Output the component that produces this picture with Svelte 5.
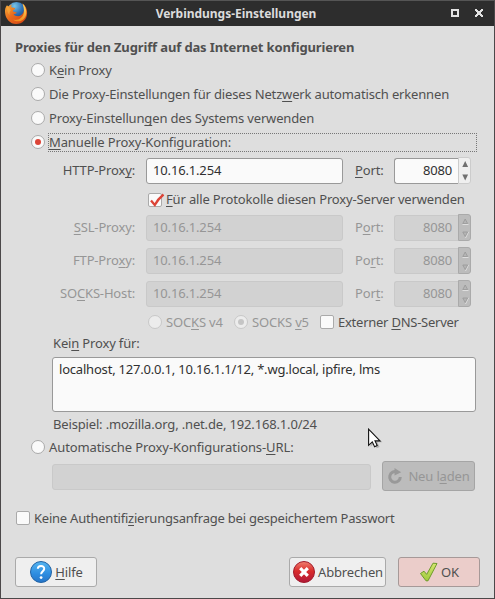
<script>
  const proxies = [
    { label: 'HTTP-Prox_y:', port: '_Port:', on: true, h: 34 },
    { label: '_SSL-Proxy:', port: 'P_ort:', h: 34 },
    { label: 'FTP-Pro_xy:', port: 'Po_rt:', h: 32 },
    { label: 'SO_CKS-Host:', port: 'Por_t:', h: 34 }
  ];
  const modes = [
    'K_ein Proxy',
    'Die Proxy-Einstellungen für dieses Netz_werk automatisch erkennen',
    'Proxy-Einstellun_gen des Systems verwenden'
  ];
</script>

{#snippet mn(t)}{@const i = t.indexOf('_')}{#if i < 0}{t}{:else}{t.slice(0, i)}<u>{t[i + 1]}</u>{t.slice(i + 2)}{/if}{/snippet}

{#snippet proxyRow(p)}
  <div class="row proxy" class:off={!p.on} style="height: {p.h}px">
    <span class="lab">{@render mn(p.label)}</span>
    <div class="field host">10.16.1.254</div>
    <span class="plab">{@render mn(p.port)}</span>
    <div class="spin">
      <div class="num">8080</div>
      <svg class="arrows" width="11" height="25" viewBox="0 0 11 25">
        {#if p.on}
          <path d="M6.200 3l2.900 6H3.300zM6.200 22.500l2.900-6H3.300z" fill="#707070" />
        {:else}
          <path d="M3.500 9.500h6M6.500 23l3-6" stroke="#dedede" fill="none" />
          <path d="M6.200 4l2.400 4.500H3.800zM6.200 21.500l2.400-4.500H3.800z" fill="#b5b5b5" stroke="#989898" stroke-width=".8" />
        {/if}
      </svg>
    </div>
  </div>
{/snippet}

<div class="window">
  <header>
    <svg class="fox" width="24" height="24" viewBox="0 0 24 24">
      <defs>
        <radialGradient id="globe" cx=".4" cy=".2" r=".8"><stop offset="0" stop-color="#77c5e8" /><stop offset=".5" stop-color="#2f71b5" /><stop offset="1" stop-color="#17356c" /></radialGradient>
        <linearGradient id="fur" x1="0" y1="0" x2="1" y2="1"><stop offset="0" stop-color="#f6b13b" /><stop offset=".45" stop-color="#ea6a1c" /><stop offset="1" stop-color="#cf3f12" /></linearGradient>
        <linearGradient id="tail" x1="0" y1="0" x2="0" y2="1"><stop offset="0" stop-color="#ffe46b" /><stop offset="1" stop-color="#f28b1c" /></linearGradient>
      </defs>
      <circle cx="12.500" cy="11" r="10" fill="url(#globe)" />
      <path d="M3 4.300C1.500 6 .6 8.900 1.100 12c.5 6 5 11 11 11 6.400 0 11-4.700 11-11 0-4-1.500-7.500-4.500-9.500 1.800 3 2.200 6 .8 9-1.200 2.700-4 4-6.600 3.600-2-.3-3-1.300-3.300-2.300 1.300.5 3-.2 3.500-1.200-1.500-.2-2.500-1.400-4-1.200-.2-1 .8-1.700 2-2.300.2-.8 0-1.100-.6-1.100-1.400 0-2.600-.4-3.300-1.400.2-.9.700-1.600 1.200-2-1.600.1-2.700.8-3.300 1.700C4.200 5.400 3.400 5 3 4.300z" fill="url(#fur)" />
      <path d="M18.500 2.500c4.500 4.500 5.500 12 .8 16-3 2.500-7.500 2.300-10 .3 5.800.8 10-2.400 10.600-7.300.3-3-.3-6-1.400-9z" fill="url(#tail)" />
      <path d="M3.200 5.500C2.500 9 3.600 12 5.500 14c-.2-2 .2-3.600 1.300-4.700L5 6.300z" fill="#f9a93a" opacity=".7" />
    </svg>
    <span class="title">Verbindungs-Einstellungen</span>
    <svg class="ctl" width="34" height="10" viewBox="0 0 34 10" shape-rendering="crispEdges">
      <path d="M1 1h8v8H1zM3 3v4h4V3z" fill="#e2e2e2" fill-rule="evenodd" />
      <path d="M25 1h2v1h1v1h2V2h1V1h2v2h-1v1h-1v2h1v1h1v2h-2V8h-1V7h-2v1h-1v1h-2V7h1V6h1V4h-1V3h-1z" fill="#e2e2e2" />
    </svg>
  </header>

  <main>
    <h1>Proxies für den Zugriff auf das Internet konfigurieren</h1>
    {#each modes as m}
      <div class="row mode"><i class="radio"></i><span>{@render mn(m)}</span></div>
    {/each}
    <div class="row mode manual"><i class="radio sel"></i><span class="focus">{@render mn('_Manuelle Proxy-Konfiguration:')}</span></div>

    {@render proxyRow(proxies[0])}
    <div class="row all">
      <i class="check"><svg width="18" height="16" viewBox="0 0 18 16"><path d="M3 7.500L6.800 12Q10 6 15.500 1.500" fill="none" stroke="#dc4437" stroke-width="2.300" /></svg></i>
      <span>{@render mn('_Für alle Protokolle diesen Proxy-Server verwenden')}</span>
    </div>
    {#each proxies.slice(1) as p}
      {@render proxyRow(p)}
    {/each}

    <div class="row socks">
      <i class="radio dis"></i><span class="dim ver">{@render mn('SOC_KS v4')}</span>
      <i class="radio dis sel"></i><span class="dim ver">{@render mn('SOCKS _v5')}</span>
      <i class="check"></i><span class="dns">{@render mn('Externer _DNS-Server')}</span>
    </div>

    <div class="row except"><span>{@render mn('Kei_n Proxy für:')}</span></div>
    <div class="area">localhost, 127.0.0.1, 10.16.1.1/12, *.wg.local, ipfire, lms</div>
    <div class="row example">Beispiel: .mozilla.org, .net.de, 192.168.1.0/24</div>
    <div class="row mode auto"><i class="radio"></i><span>{@render mn('Automatische Proxy-Konfigurations-_URL:')}</span></div>
    <div class="row url">
      <div class="field off-field"></div>
      <div class="btn reload">
        <svg width="16" height="18" viewBox="0 0 16 18"><path d="M10 5A5.300 5.300 0 1 0 13.300 10" fill="none" stroke="#999" stroke-width="3" /><path d="M7.500 1l6.700 4.200-6.700 3.300z" fill="#999" /></svg>
        <span>{@render mn('Neu l_aden')}</span>
      </div>
    </div>
    <div class="row auth"><i class="check"></i><span>{@render mn('Keine Authentifi_zierungsanfrage bei gespeichertem Passwort')}</span></div>

    <footer>
      <div class="btn help">
        <svg width="24" height="24" viewBox="0 0 24 24">
          <defs><linearGradient id="hb" x1="0" y1="0" x2="0" y2="1"><stop offset="0" stop-color="#55b5f0" /><stop offset=".6" stop-color="#2d8ce0" /><stop offset="1" stop-color="#2675c8" /></linearGradient></defs>
          <circle cx="12" cy="12" r="10.500" fill="url(#hb)" stroke="#2263a5" />
          <path d="M8.800 8.800C8.900 4.800 15.500 5 15.200 8.900c-.2 2.200-3 2.500-3.100 5.300" fill="none" stroke="#fff" stroke-width="2" />
          <circle cx="12.100" cy="17.600" r="1.400" fill="#fff" />
        </svg>
        <span>{@render mn('_Hilfe')}</span>
      </div>
      <div class="btn cancel">
        <svg width="24" height="24" viewBox="0 0 24 24">
          <defs><linearGradient id="rb" x1="0" y1="0" x2="0" y2="1"><stop offset="0" stop-color="#f08070" /><stop offset=".45" stop-color="#d92c2c" /><stop offset="1" stop-color="#b01838" /></linearGradient></defs>
          <circle cx="12" cy="12" r="10.500" fill="url(#rb)" stroke="#a11b2c" />
          <path d="M8.200 8.200l7.600 7.600M15.800 8.200l-7.600 7.600" stroke="#fff" stroke-width="3.200" />
        </svg>
        <span>Abbrechen</span>
      </div>
      <div class="btn ok">
        <svg width="20" height="22" viewBox="0 0 20 22">
          <defs><linearGradient id="gb" x1="0" y1="0" x2="0" y2="1"><stop offset="0" stop-color="#d5e66f" /><stop offset="1" stop-color="#9fcb3c" /></linearGradient></defs>
          <path d="M1.500 12.500L5 10.200l2.700 3.200L14 2.200l4 .3L9 19.800H7z" fill="url(#gb)" stroke="#6d9b2a" stroke-linejoin="round" />
        </svg>
        <span>OK</span>
      </div>
    </footer>
  </main>

  <svg class="pointer" width="16" height="22" viewBox="0 0 16 22">
    <path d="M1.500 1.500v16.300l3.900-3.600 2.300 5 2.900-1.200-2.200-4.800h4.900z" fill="#0003" transform="translate(1 1)" />
    <path d="M.6 1.200v16.100l3.700-3.500 2.300 4.900 2.600-1.200-2.200-4.600H12z" fill="#fff" stroke="#111" stroke-width="1.100" />
  </svg>
</div>

<style>
  :global(body) { margin: 0; background: #4b4849; }
  .window {
    box-sizing: border-box; width: 495px; height: 599px; position: relative;
    border: 1px solid #4b4849; border-top-color: #555; background: #dedede;
    font: 13px/18px 'Noto Sans', sans-serif; letter-spacing: -.16px; color: #505050; white-space: nowrap; overflow: hidden;
  }
  header { box-sizing: border-box; height: 25px; padding-right: 23px; background: #2d2d2d; display: flex; align-items: center; position: relative; justify-content: center; }
  .title { color: #dcdcdc; font-weight: 700; font-size: 12px; letter-spacing: -.03px; }
  .fox { position: absolute; left: 3px; top: 0; }
  .ctl { position: absolute; right: 10px; top: 7px; }
  main { display: flex; flex-direction: column; padding-top: 10px; }
  h1 { margin: 0 0 0 14px; font-size: 13px; line-height: 22px; height: 22px; font-weight: 700; letter-spacing: -.13px; }
  u { text-decoration: underline; text-decoration-thickness: 1px; text-underline-offset: 2px; text-decoration-skip-ink: none; }
  .row { display: flex; align-items: center; flex: none; }
  .mode { height: 24px; padding-left: 30px; }
  .manual { letter-spacing: -.13px; }
  .radio, .check { box-sizing: border-box; width: 14px; height: 14px; flex: none; border: 1px solid #aaa; background: #fafafa; }
  .radio { border-radius: 50%; margin-right: 4px; display: grid; place-items: center; }
  .check { border-radius: 2px; margin-right: 4px; }
  .radio.sel::after { content: ''; width: 6px; height: 6px; border-radius: 50%; background: #dc4437; }
  .radio.dis { border-color: #c8c8c8; background: #ececec; }
  .radio.dis.sel::after { background: #c5c5c5; }
  .focus { box-sizing: border-box; width: 429px; height: 19px; line-height: 17px; outline: 1px dotted #777; outline-offset: -1px; margin-left: -1px; padding: 1px 0 0 1px; }
  .lab { width: 134px; text-align: right; margin-right: 11px; padding-bottom: 2px; }
  .field { box-sizing: border-box; height: 26px; border: 1px solid #999; border-radius: 3px; background: #fafafa; color: #303030; line-height: 23px; padding-left: 6px; }
  .host { width: 197px; margin-right: 12px; }
  .plab { width: 39px; padding-bottom: 2px; }
  .spin { display: flex; align-items: flex-end; height: 26px; }
  .num { box-sizing: border-box; width: 64px; height: 26px; border: 1px solid #999; border-right: 0; border-radius: 3px 0 0 3px; background: #fafafa; color: #303030; text-align: right; line-height: 23px; padding-right: 6px; }
  .arrows { box-sizing: content-box; flex: none; border: 1px solid #ccc; border-radius: 0 3px 3px 0; background: #efefef; }
  .off, .dim { color: #969696; }
  .off .field, .off .num, .off-field { background: #d2d2d2; border-color: #c9c9c9; color: #969696; }
  .off .arrows { background: #bcbcbc; border-color: #aaa; }
  .all { height: 23px; padding-left: 147px; }
  .all span { padding-bottom: 2px; }
  .all .check svg { display: block; margin: -1px; }
  .socks { height: 22px; padding-left: 147px; }
  .ver { width: 68px; }
  .dns { letter-spacing: -.25px; }
  .except { height: 20px; padding-left: 52px; }
  .area { box-sizing: border-box; width: 424px; height: 55px; margin: 4px 0 0 51px; border: 1px solid #999; border-radius: 3px; background: #fafafa; color: #303030; padding: 2px 6px; letter-spacing: -.2px; }
  .example { height: 23px; padding-left: 52px; }
  .auto { height: 23px; letter-spacing: -.1px; }
  .url { height: 36px; padding-left: 51px; gap: 11px; }
  .off-field { width: 319px; margin-top: 2px; }
  .btn { box-sizing: border-box; height: 30px; display: flex; align-items: center; justify-content: center; gap: 2px; border: 1px solid #aaa; border-radius: 3px; background: #efefef; }
  .reload { width: 93px; background: #bcbcbc; border-color: #a5a5a5; color: #969696; gap: 5px; }
  .auth { height: 24px; margin-top: 12px; padding-left: 15px; letter-spacing: -.23px; }
  footer { display: flex; margin-top: 27px; padding-left: 14px; }
  .help { width: 82px; margin-right: 192px; }
  .cancel { width: 97px; margin-right: 12px; }
  .ok { width: 82px; background: #ebcdca; border-color: #a69998; }
  .pointer { position: absolute; left: 367px; top: 427px; }
</style>
